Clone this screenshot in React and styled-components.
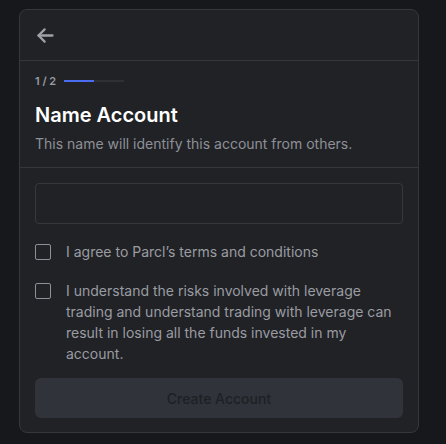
import React from 'react';
import styled, { createGlobalStyle } from 'styled-components';

const Global = createGlobalStyle`
  html, body {
    margin: 0;
    background: #17181c;
    font-family: Inter, "Noto Sans", sans-serif;
  }
`;

const Page = styled.div`
  padding: 9px 0 0 19px;
`;

const Card = styled.div`
  width: 400px;
  background: #212226;
  border: 1px solid #36373b;
  border-radius: 8px;
  box-sizing: border-box;
`;

const Header = styled.div`
  height: 50px;
  display: flex;
  align-items: center;
  padding: 0 15px;
  border-bottom: 1px solid #36373b;
`;

const BackButton = styled.button`
  background: none;
  border: none;
  padding: 0;
  display: flex;
  color: #9fa1a7;
  cursor: pointer;
`;

const Intro = styled.div`
  padding: 13px 15px 13px;
  border-bottom: 1px solid #36373b;
`;

const Progress = styled.div`
  display: flex;
  align-items: center;
  gap: 8px;
  font-size: 11px;
  font-weight: 600;
  color: #9a9ca2;
`;

const Track = styled.div`
  width: 60px;
  height: 2px;
  background: #2e3034;
  overflow: hidden;
`;

const Fill = styled.div`
  height: 100%;
  width: ${p => p.$pct}%;
  background: #4a6cf0;
`;

const Title = styled.h2`
  margin: 14px 0 6px;
  font-size: 20px;
  line-height: 26px;
  font-weight: 600;
  color: #ffffff;
`;

const Subtitle = styled.p`
  margin: 0;
  font-size: 14px;
  line-height: 20px;
  color: #8e9097;
`;

const Body = styled.div`
  padding: 15px 15px 14px;
  display: flex;
  flex-direction: column;
`;

const Input = styled.input`
  height: 41px;
  box-sizing: border-box;
  background: #212226;
  border: 1px solid #37383c;
  border-radius: 4px;
  color: #fff;
  padding: 0 12px;
  font-family: inherit;
  font-size: 14px;
  outline: none;
  margin-bottom: 17px;
`;

const CheckRow = styled.label`
  display: flex;
  gap: 15px;
  align-items: flex-start;
  padding: ${p => (p.$top ? '0' : '10px')} 0 8px;
  font-size: 14px;
  line-height: 21px;
  color: #9a9ca2;
`;

const Box = styled.span`
  flex: none;
  width: 16px;
  height: 16px;
  margin-top: 3px;
  box-sizing: border-box;
  border: 1px solid #8e9097;
  border-radius: 2px;
`;

const Submit = styled.button`
  margin-top: 6px;
  height: 40px;
  border: none;
  border-radius: 6px;
  background: #30333a;
  color: #1e2025;
  font-family: inherit;
  font-size: 14px;
  font-weight: 500;
`;

export default function App() {
  return (
    <Page>
      <Global />
      <Card>
        <Header>
          <BackButton aria-label="Back">
            <svg width="21" height="21" viewBox="0 0 24 24" fill="none" stroke="currentColor" strokeWidth="2.6" strokeLinecap="round" strokeLinejoin="round">
              <path d="M20 12H4" />
              <path d="M11 19l-7-7 7-7" />
            </svg>
          </BackButton>
        </Header>
        <Intro>
          <Progress>
            1 / 2
            <Track><Fill $pct={50} /></Track>
          </Progress>
          <Title>Name Account</Title>
          <Subtitle>This name will identify this account from others.</Subtitle>
        </Intro>
        <Body>
          <Input />
          <CheckRow $top>
            <Box />
            I agree to Parcl’s terms and conditions
          </CheckRow>
          <CheckRow>
            <Box />
            I understand the risks involved with leverage trading and understand trading with leverage can result in losing all the funds invested in my account.
          </CheckRow>
          <Submit disabled>Create Account</Submit>
        </Body>
      </Card>
    </Page>
  );
}
